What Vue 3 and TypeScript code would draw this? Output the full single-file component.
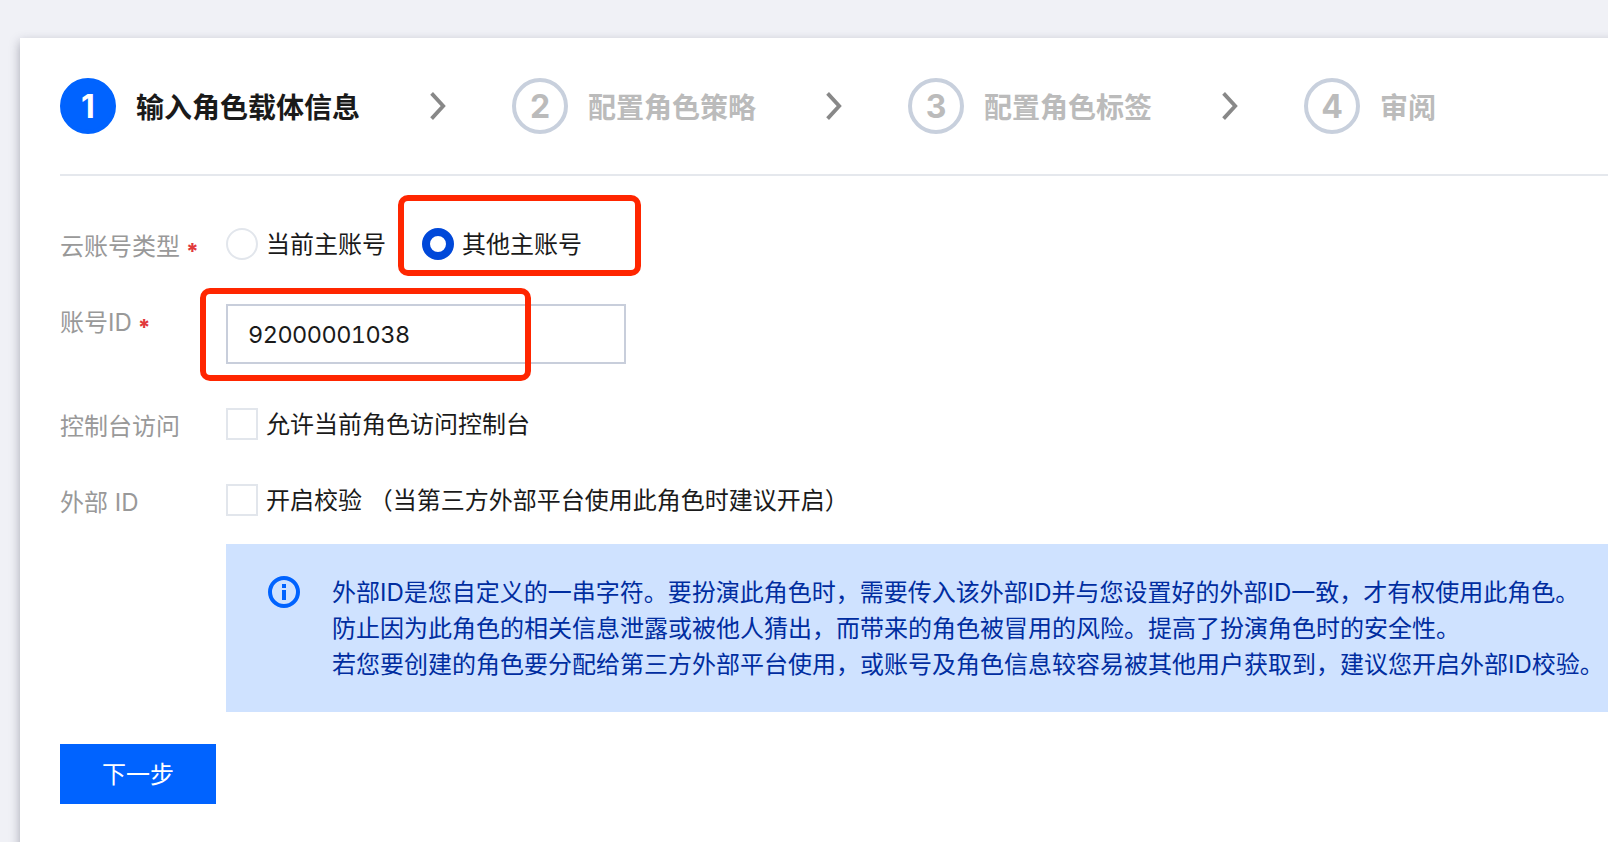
<script setup lang="ts">
import { ref } from 'vue'

interface Step {
  id: number
  title: string
}

interface AccountType {
  value: string
  label: string
}

const steps: Step[] = [
  { id: 1, title: '输入角色载体信息' },
  { id: 2, title: '配置角色策略' },
  { id: 3, title: '配置角色标签' },
  { id: 4, title: '审阅' },
]

const accountTypes: AccountType[] = [
  { value: 'current', label: '当前主账号' },
  { value: 'other', label: '其他主账号' },
]

const tips = [
  '外部ID是您自定义的一串字符。要扮演此角色时，需要传入该外部ID并与您设置好的外部ID一致，才有权使用此角色。',
  '防止因为此角色的相关信息泄露或被他人猜出，而带来的角色被冒用的风险。提高了扮演角色时的安全性。',
  '若您要创建的角色要分配给第三方外部平台使用，或账号及角色信息较容易被其他用户获取到，建议您开启外部ID校验。',
]

const current = ref(1)
const accountType = ref('other')
const accountId = ref('92000001038')
const consoleAccess = ref(false)
const externalId = ref(false)

function next() {
  if (current.value < steps.length) current.value++
}
</script>

<template>
  <div class="page">
    <main class="card">
      <ol class="steps">
        <li v-for="(step, i) in steps" :key="step.id" class="step" :class="{ active: step.id === current }">
          <span class="num">{{ step.id }}</span>
          <span class="title">{{ step.title }}</span>
          <svg v-if="i < steps.length - 1" class="arrow" width="16" height="28" viewBox="0 0 16 28">
            <path d="M1.6 1.4 13.2 14 1.6 26.6" fill="none" stroke="#888" stroke-width="3.8" />
          </svg>
        </li>
      </ol>

      <form class="form" @submit.prevent="next">
        <div class="row">
          <span class="label">云账号类型<i class="required">*</i></span>
          <div class="options">
            <label v-for="t in accountTypes" :key="t.value" class="option" :class="{ marked: t.value === 'other' }">
              <input v-model="accountType" class="radio" type="radio" name="accountType" :value="t.value">
              <span class="option-text">{{ t.label }}</span>
            </label>
          </div>
        </div>

        <div class="row">
          <span class="label">账号ID<i class="required">*</i></span>
          <div class="field">
            <input v-model="accountId" class="text-input" type="text">
          </div>
        </div>

        <div class="row">
          <span class="label">控制台访问</span>
          <label class="option">
            <input v-model="consoleAccess" class="checkbox" type="checkbox">
            <span class="option-text">允许当前角色访问控制台</span>
          </label>
        </div>

        <div class="row">
          <span class="label">外部 ID</span>
          <div class="external">
            <label class="option">
              <input v-model="externalId" class="checkbox" type="checkbox">
              <span class="option-text">开启校验 （当第三方外部平台使用此角色时建议开启）</span>
            </label>
            <div class="alert">
              <svg class="info" width="32" height="32" viewBox="0 0 32 32">
                <circle cx="16" cy="16" r="14" fill="none" stroke="#0063ff" stroke-width="4" />
                <path d="M14 8h4v4h-4zM14 14h4v10h-4z" fill="#0063ff" />
              </svg>
              <div class="tips">
                <p v-for="tip in tips" :key="tip">{{ tip }}</p>
              </div>
            </div>
          </div>
        </div>

        <button class="submit" type="submit">下一步</button>
      </form>
    </main>
  </div>
</template>

<style>
body { background: #f0f1f6; overflow: hidden; }
</style>

<style scoped>
.page {
  box-sizing: border-box; height: 100vh; padding: 38px 0 0 20px;
  overflow: hidden;
  font-family: Inter, "Noto Sans CJK SC", sans-serif;
  font-size: 24px; color: #1a1a1a;
}
.card {
  box-sizing: border-box; height: 900px; margin-right: -20px; padding: 40px 0 0 40px;
  background: #fff;
  box-shadow: 0 4px 10px rgba(54, 58, 80, 0.4);
}
.steps {
  display: flex; height: 96px; margin: 0; padding: 0; list-style: none;
  border-bottom: 2px solid #e5e8ed;
}
.step {
  display: flex; align-items: center; height: 56px;
  font-size: 28px; font-weight: 700; color: #bbb; white-space: nowrap;
}
.num {
  box-sizing: border-box; width: 56px; height: 56px;
  border: 4px solid #c8d0dd; border-radius: 50%;
  line-height: 50px; text-align: center; font-size: 32px;
}
.title { margin-left: 20px; padding-top: 3px; line-height: 56px; }
.step.active { color: #1a1a1a; }
.step.active .num { background: #0063ff; border-color: #0063ff; color: #fff; }
.arrow { display: block; margin: 0 66px 0 70px; }

.form { display: flex; flex-direction: column; gap: 44px; padding-top: 52px; }
.row { display: grid; grid-template-columns: 166px 1fr; align-items: start; }
.label { height: 32px; line-height: 38px; color: #999; white-space: nowrap; }
.required {
  display: inline-block; margin-left: 6px; vertical-align: -4px;
  font-size: 22px; font-style: normal; font-weight: 800; line-height: 1; color: #e1393b;
}
.options { display: flex; gap: 36px; }
.option {
  position: relative; display: flex; align-items: center; gap: 8px;
  height: 32px; line-height: 32px; white-space: nowrap;
}
.option-text { padding-top: 2px; }
.radio, .checkbox {
  appearance: none; box-sizing: border-box; flex: none;
  width: 32px; height: 32px; margin: 0;
  border: 2px solid #e2e6ec; background: #fff;
}
.radio { border-radius: 50%; }
.radio:checked { border: 8px solid #0048d9; }
.checkbox:checked { background: #0063ff; border-color: #0063ff; }
.field { position: relative; width: 400px; }
.text-input {
  display: block; box-sizing: border-box; width: 400px; height: 60px;
  padding: 0 20px; border: 2px solid #c8cedb; border-radius: 0; outline: none;
  background: #fff; font: inherit; color: #1a1a1a;
  font-size: 23.5px; letter-spacing: -0.55px;
  font-variant-numeric: tabular-nums;
}

/* highlight frames around the important fields */
.marked::after, .field::after {
  content: ''; position: absolute; box-sizing: border-box;
  border: 6px solid #ff2600; border-radius: 10px; pointer-events: none;
}
.marked::after { left: -24px; top: -33px; width: 243px; height: 81px; }
.field::after { left: -26px; top: -16px; width: 331px; height: 93px; }

.external { display: flex; flex-direction: column; gap: 28px; min-width: 0; }
.alert {
  display: flex; align-items: flex-start; box-sizing: border-box;
  height: 168px; padding: 30px 0 0 42px;
  background: #cfe2ff; color: #002da0;
}
.info { flex: none; margin: 2px 32px 0 0; }
.tips { padding-top: 1px; }
.tips p { margin: 0; line-height: 36px; white-space: nowrap; }
.submit {
  width: 156px; height: 60px; margin-top: -12px; padding: 2px 0 0; border: 0;
  background: #0063ff; color: #fff; font: inherit; line-height: 58px;
}
</style>
